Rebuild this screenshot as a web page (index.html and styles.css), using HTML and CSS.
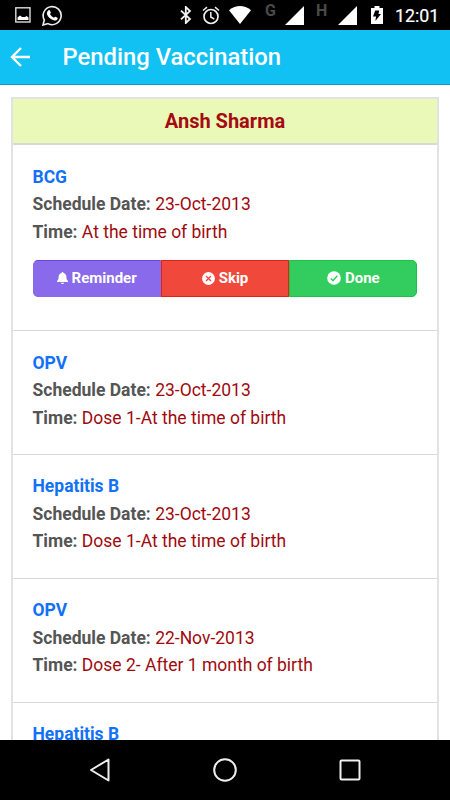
FILE: index.html
```html
<!DOCTYPE html>
<html lang="en">
<head>
<meta charset="utf-8">
<title>Pending Vaccination</title>
<link rel="stylesheet" href="styles.css">
</head>
<body>
<div class="screen">
  <header class="status">
    <svg class="picture" width="16" height="16" viewBox="0 0 16 16"><rect x=".8" y=".8" width="14.2" height="14.2" fill="none" stroke="#ddd" stroke-width="1.4"/><path d="M2.500 13V10.500L5 8.500l2 1.500h3l1.500-1 2 1.500V13z" fill="#fff"/></svg>
    <svg class="whatsapp" width="21" height="21" viewBox="0 0 21 21"><path d="M1 20l1.300-5A9 9 0 1 1 6 18.600z" fill="none" stroke="#eee" stroke-width="1.600"/><path d="M6.300 5.400C7.100 4.700 7.700 5 8 5.700l.8 1.800c.2.500-.6 1.200-.8 1.600 1 1.900 2.200 2.900 4 3.600.4-.3.9-1.200 1.400-1l2 1c.5.300.4.900 0 1.600-.8 1.200-2.300 1.500-3.800 1-3.300-1-5.300-3-6.500-5.700C4.600 8 5.100 6.400 6.300 5.400z" fill="#fff"/></svg>
    <span class="spacer"></span>
    <svg class="bluetooth" width="12" height="18" viewBox="0 0 12 18"><path d="M1 4.700l9 8.300-4.200 4V1L10 5l-9 8.300" fill="none" stroke="#f2f2f2" stroke-width="1.800"/></svg>
    <svg class="alarm" width="18" height="19" viewBox="0 0 18 19"><circle cx="9" cy="10.500" r="7" fill="none" stroke="#eee" stroke-width="1.700"/><path d="M8.800 6v5l3.500 2.200M1 4.500L5 1.200M13 1.200l4 3.300" fill="none" stroke="#eee" stroke-width="1.500"/></svg>
    <svg class="wifi" width="22" height="18" viewBox="0 0 22 18"><path d="M0 4.200Q11-4 22 4.200L11 18z" fill="#fff"/></svg>
    <span class="net net-g">G</span>
    <svg class="signal-a" width="19" height="19" viewBox="0 0 19 19"><path d="M0 19L19 0v19z" fill="#fff"/></svg>
    <span class="net net-h">H</span>
    <svg class="signal-b" width="19" height="19" viewBox="0 0 19 19"><path d="M0 19L19 0v19z" fill="#fff"/></svg>
    <svg class="battery" width="12" height="18" viewBox="0 0 12 18"><path d="M0 2h3.500V0h5v2H12v16H0z" fill="#fff"/><path d="M4.200 4.500h4L7.500 8H10l-5.600 7L5 10.500H2z" fill="#000"/></svg>
    <span class="clock">12:01</span>
  </header>
  <nav class="appbar">
    <svg width="20" height="20" viewBox="0 0 20 20"><path d="M20 10H2M11 1L2 10l9 9" fill="none" stroke="#fff" stroke-width="2.400"/></svg>
    <h1>Pending Vaccination</h1>
  </nav>
  <main>
    <section class="card">
      <h2>Ansh Sharma</h2>
      <article class="item first">
        <h3>BCG</h3>
        <p><b>Schedule Date:</b> <span class="date">23-Oct-2013</span></p>
        <p><b>Time:</b> <span class="time">At the time of birth</span></p>
        <div class="actions">
          <button class="reminder"><svg width="11" height="12" viewBox="0 0 11 12"><path d="M4.700 1V0h1.600v1C8.500 1.500 9.400 3 9.400 5c0 2.400.6 3.200 1.600 4v1H0V9c1-.8 1.600-1.600 1.600-4 0-2 .9-3.500 3.100-4zM4 10.700h3C7 11.500 6.300 12 5.500 12S4 11.500 4 10.700z" fill="#fff"/></svg>Reminder</button>
          <button class="skip"><svg width="13" height="13" viewBox="0 0 13 13"><circle cx="6.500" cy="6.500" r="6.400" fill="#fff"/><path d="M4 4l5 5M9 4L4 9" stroke="#f0483a" stroke-width="1.300"/></svg>Skip</button>
          <button class="done"><svg width="14" height="14" viewBox="0 0 14 14"><circle cx="7" cy="7" r="6.800" fill="#fff"/><path d="M3.800 7.500l2.200 2.200 4.300-5" fill="none" stroke="#33cd5f" stroke-width="1.400"/></svg>Done</button>
        </div>
      </article>
      <article class="item">
        <h3>OPV</h3>
        <p><b>Schedule Date:</b> <span class="date">23-Oct-2013</span></p>
        <p><b>Time:</b> <span class="time">Dose 1-At the time of birth</span></p>
      </article>
      <article class="item">
        <h3>Hepatitis B</h3>
        <p><b>Schedule Date:</b> <span class="date">23-Oct-2013</span></p>
        <p><b>Time:</b> <span class="time">Dose 1-At the time of birth</span></p>
      </article>
      <article class="item">
        <h3>OPV</h3>
        <p><b>Schedule Date:</b> <span class="date">22-Nov-2013</span></p>
        <p><b>Time:</b> <span class="time">Dose 2- After 1 month of birth</span></p>
      </article>
      <article class="item">
        <h3>Hepatitis B</h3>
      </article>
    </section>
  </main>
  <footer class="navbar">
    <svg width="22" height="26" viewBox="0 0 22 26"><path d="M19.500 2.500v21L2 13z" fill="none" stroke="#eee" stroke-width="2" stroke-linejoin="round"/></svg>
    <svg width="26" height="26" viewBox="0 0 26 26"><circle cx="13" cy="13" r="10.800" fill="none" stroke="#eee" stroke-width="2"/></svg>
    <svg width="22" height="22" viewBox="0 0 22 22"><rect x="1.500" y="1.500" width="19" height="19" rx="1" fill="none" stroke="#eee" stroke-width="2"/></svg>
  </footer>
</div>
</body>
</html>
```
FILE: styles.css
```css
* { box-sizing: border-box; margin: 0; padding: 0; }
body { font-family: Roboto, "Liberation Sans", sans-serif; }
svg { display: block; flex: none; }
.screen { width: 450px; height: 800px; display: flex; flex-direction: column; background: #fff; overflow: hidden; }

.status { height: 30px; flex: none; display: flex; align-items: flex-start; background: #000; color: #fff; }
.picture { margin: 7px 0 0 15px; }
.whatsapp { margin: 5px 0 0 11px; }
.spacer { flex: 1; }
.bluetooth { margin: 6px 10px 0 0; }
.alarm { margin: 6px 9px 0 0; }
.wifi { margin: 6px 14px 0 0; }
.net { font-size: 16px; line-height: 20px; font-weight: 700; color: #4a4a4a; margin-top: 1px; }
.net-g { width: 20px; }
.net-h { width: 22px; }
.signal-a { margin: 6px 12px 0 0; }
.signal-b { margin: 6px 14px 0 0; }
.battery { margin: 6px 12px 0 0; }
.clock { width: 55px; font-size: 17.800px; line-height: 32px; font-weight: 400; -webkit-text-stroke: .2px #fff; }

.appbar { height: 55px; flex: none; display: flex; align-items: center; padding-left: 10px; gap: 32.500px; background: #11c1f3; border-bottom: 1px solid #0a9dc7; }
.appbar h1 { font-size: 23.800px; line-height: 54px; font-weight: 500; color: #fff; white-space: nowrap; }

main { flex: 1; min-height: 0; overflow: hidden; padding: 12px 11px 0; }
.card { border: 2px solid #e2e2e2; }
.card h2 { height: 46px; font-size: 20px; line-height: 45px; font-weight: 700; text-align: center; color: #a60a12; background: #eaf8b8; border-bottom: 2px solid #d8d8d8; }
.item { height: 123.900px; padding: 18.500px 19.500px 0; border-bottom: 1px solid #d8d8d8; color: #555; font-size: 17.500px; line-height: 27.500px; white-space: nowrap; }
.item.first { height: 186px; }
.item h3 { font-size: 17.500px; font-weight: 700; color: #1271f7; }
.item b { font-weight: 700; }
.date, .time { color: #a00a0e; }

.actions { display: flex; height: 37.500px; margin-top: 13.500px; }
.actions button { flex: 1; display: flex; align-items: center; justify-content: center; gap: 4px; border: 1px solid; color: #fff; font: 700 15px/35px Roboto, sans-serif; }
.actions .reminder { background: #886aea; border-color: #6b46e5 #886aea #886aea; border-radius: 5px 0 0 5px; }
.actions .skip { background: #f0483a; border-color: #e42112; }
.actions .done { background: #33cd5f; border-color: #18c34a; border-radius: 0 5px 5px 0; }

.navbar { height: 60px; flex: none; display: flex; align-items: center; justify-content: space-between; padding: 0 89px; background: #000; }
```
